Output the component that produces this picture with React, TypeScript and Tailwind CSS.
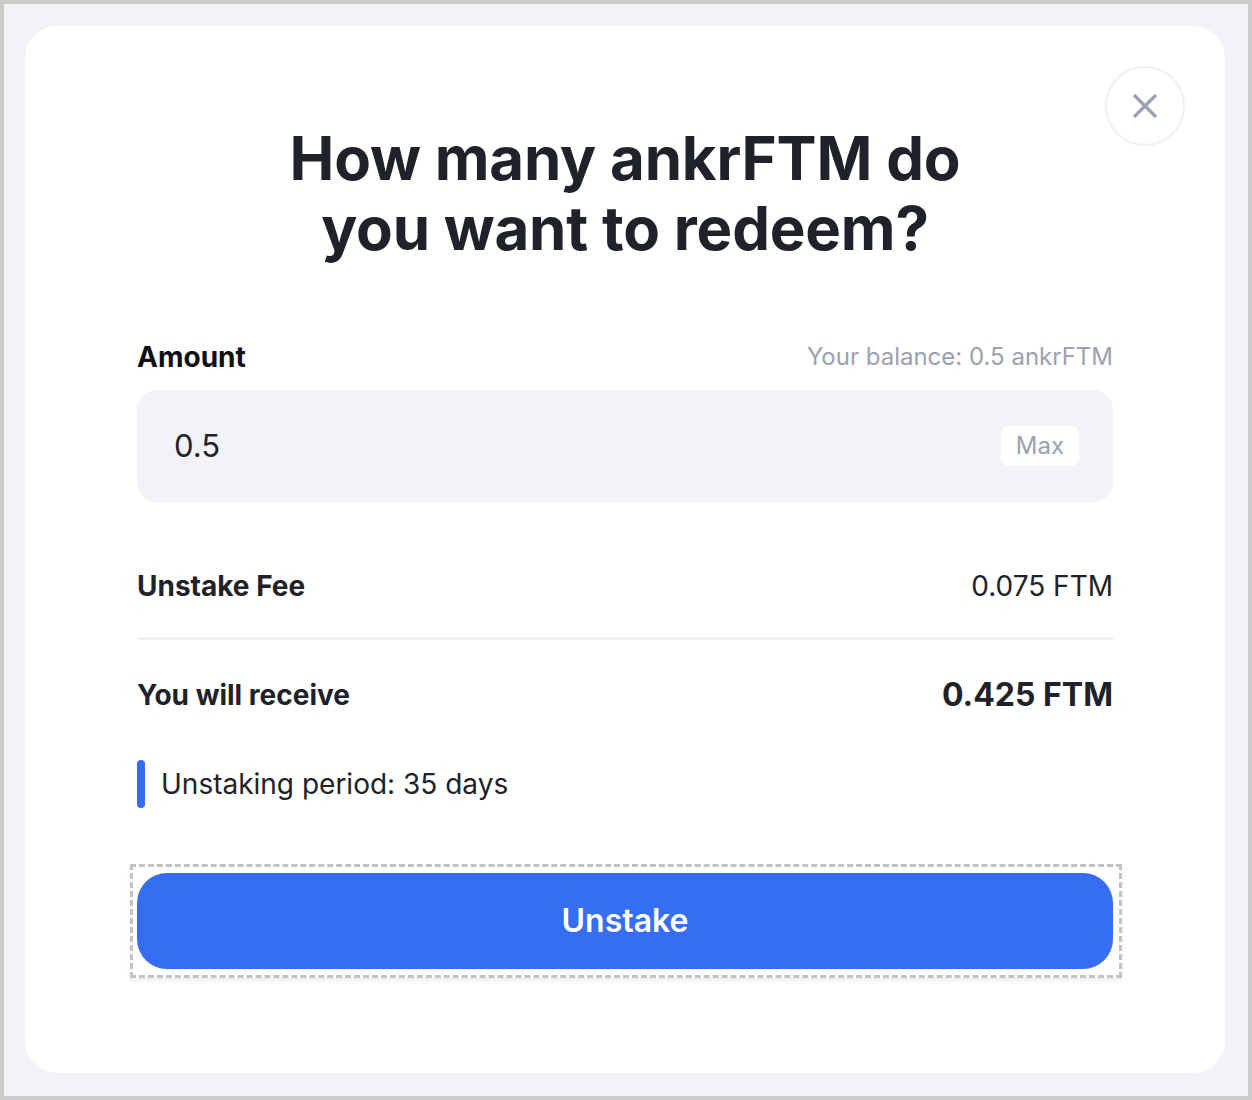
import React from "react";

export default function App() {
  return (
    <div
      className="w-[1252px] h-[1100px] border-4 border-[#cbcbcb] bg-[#f2f3f7] pl-[21px] pr-[23px] pt-[22px] pb-[23px]"
      style={{ fontFamily: "Inter, 'Noto Sans', sans-serif" }}
    >
      <div className="relative h-full w-full rounded-[32px] bg-white px-[112px] pt-[97px]">
        <button className="absolute right-[40px] top-[40px] flex h-[80px] w-[80px] items-center justify-center rounded-full border-2 border-[#eef0f4] bg-white">
          <svg width="26" height="26" viewBox="0 0 26 26" fill="none">
            <path d="M2 2L24 24M24 2L2 24" stroke="#9aa1b0" strokeWidth="3.2" strokeLinecap="butt" />
          </svg>
        </button>

        <h1 className="text-center text-[60px] font-bold leading-[70px] tracking-[-0.2px] text-[#1f2229]">
          How many ankrFTM do
          <br />
          you want to redeem?
        </h1>

        <div className="mt-[78px] flex h-[32px] items-center justify-between">
          <span className="text-[28px] font-bold text-[#0f1013]">Amount</span>
          <span className="text-[24px] text-[#9aa1b0]">Your balance: 0.5 ankrFTM</span>
        </div>

        <div className="mt-[17px] flex h-[112px] items-center justify-between rounded-[20px] bg-[#f2f3f7] pl-[37px] pr-[34px]">
          <span className="text-[31px] text-[#1f2229]">0.5</span>
          <span className="flex h-[40px] w-[78px] items-center justify-center rounded-[8px] bg-white text-[24px] text-[#9aa1b0]">
            Max
          </span>
        </div>

        <div className="mt-[68px] flex h-[32px] items-center justify-between">
          <span className="text-[28px] font-bold text-[#1f2229]">Unstake Fee</span>
          <span className="text-[28px] text-[#1f2229]">0.075 FTM</span>
        </div>

        <div className="mt-[35px] h-[3px] w-full bg-[#f0f1f4]" />

        <div className="mt-[35px] flex h-[40px] items-center justify-between">
          <span className="text-[28px] font-bold text-[#1f2229]">You will receive</span>
          <span className="text-[32px] font-bold text-[#1f2229]">0.425 FTM</span>
        </div>

        <div className="mt-[45px] flex h-[48px] items-center gap-[16px]">
          <div className="h-[48px] w-[8px] rounded-full bg-[#356df3]" />
          <span className="text-[28px] text-[#1f2229]">Unstaking period: 35 days</span>
        </div>

        <div className="-ml-[7px] -mr-[9px] mt-[56px] border-[3px] border-dashed border-[#c2c2c2] pb-[6px] pl-[4px] pr-[6px] pt-[6px] shadow-[0_3px_4px_rgba(0,0,0,0.07)]">
          <button className="flex h-[96px] w-full items-center justify-center rounded-[30px] bg-[#356df3] text-[32px] font-semibold text-white">
            Unstake
          </button>
        </div>
      </div>
    </div>
  );
}
